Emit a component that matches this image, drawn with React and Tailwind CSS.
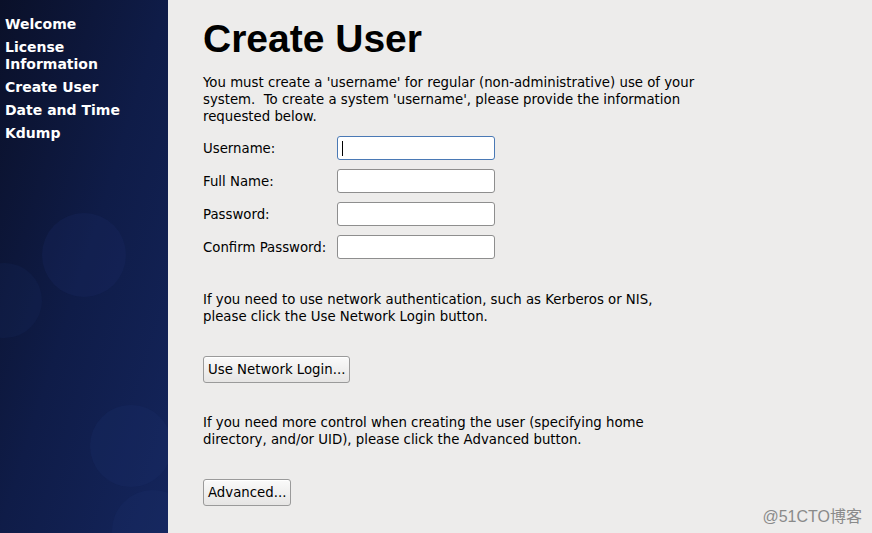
import React from "react";

const navItems = [["Welcome"], ["License", "Information"], ["Create User"], ["Date and Time"], ["Kdump"]];

const fields = ["Username:", "Full Name:", "Password:", "Confirm Password:"];

const Sidebar = () => (
  <div className="relative w-[168px] shrink-0 overflow-hidden bg-gradient-to-br from-[#0a1029] via-[#0f1c48] to-[#14255c]">
    {/* faint bubbles */}
    <div className="absolute left-[42px] top-[213px] h-[84px] w-[84px] rounded-full bg-[#1a2d66] opacity-25" />
    <div className="absolute left-[-33px] top-[263px] h-[75px] w-[75px] rounded-full bg-[#1a2d66] opacity-20" />
    <div className="absolute left-[90px] top-[405px] h-[82px] w-[82px] rounded-full bg-[#1b2f6a] opacity-25" />
    <div className="absolute left-[112px] top-[490px] h-[82px] w-[82px] rounded-full bg-[#1b2f6a] opacity-25" />
    <nav className="relative flex flex-col gap-[6px] px-[5px] pt-[16px] font-['DejaVu_Sans',sans-serif] text-[14px] font-bold leading-[17px] text-white">
      {navItems.map((lines) => (
        <div key={lines[0]}>
          {lines.map((l) => (
            <div key={l}>{l}</div>
          ))}
        </div>
      ))}
    </nav>
  </div>
);

const Button = ({ children }) => (
  <button className="h-[27px] rounded-[3px] border border-[#9a9a9a] bg-gradient-to-b from-[#fafafa] to-[#e6e5e4] px-[4px] text-[13.3px] leading-none text-black shadow-[inset_0_1px_0_#fff]">
    {children}
  </button>
);

export default function App() {
  return (
    <div className="flex h-[533px] w-[872px] overflow-hidden bg-[#edeceb] font-['DejaVu_Sans',sans-serif]">
      <Sidebar />
      <main className="relative flex-1 pl-[35px] text-[13.3px] leading-[17px] text-black">
        <h1 className="mt-[18px] font-['Liberation_Sans',Arial,sans-serif] text-[39px] font-bold leading-[42px]">
          Create User
        </h1>
        <p className="mt-[14px]">
          You must create a 'username' for regular (non-administrative) use of your
          <br />
          system.&nbsp; To create a system 'username', please provide the information
          <br />
          requested below.
        </p>
        <div className="mt-[11px] flex flex-col gap-[9px]">
          {fields.map((f, i) => (
            <div key={f} className="flex items-center">
              <label className="w-[134px]">{f}</label>
              <div
                className={
                  i === 0
                    ? "flex h-[24px] w-[158px] items-center rounded-[3px] border border-[#4a79b5] bg-white px-[4px]"
                    : "h-[24px] w-[158px] rounded-[3px] border border-[#8e8e8e] bg-white"
                }
              >
                {i === 0 && <span className="h-[15px] w-px bg-black" />}
              </div>
            </div>
          ))}
        </div>
        <p className="mt-[32px]">
          If you need to use network authentication, such as Kerberos or NIS,
          <br />
          please click the Use Network Login button.
        </p>
        <div className="mt-[31px]">
          <Button>Use Network Login...</Button>
        </div>
        <p className="mt-[31px]">
          If you need more control when creating the user (specifying home
          <br />
          directory, and/or UID), please click the Advanced button.
        </p>
        <div className="mt-[31px]">
          <Button>Advanced...</Button>
        </div>
        <div className="absolute bottom-[8px] right-[10px] font-['Liberation_Sans','Noto_Sans_CJK_SC',sans-serif] text-[16px] text-[#8a8a8a]">
          @51CTO博客
        </div>
      </main>
    </div>
  );
}
